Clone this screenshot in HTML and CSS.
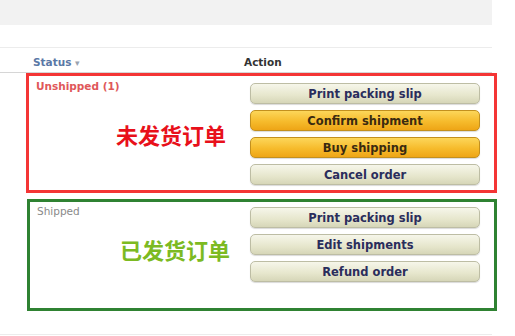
FILE: index.html
```html
<!DOCTYPE html>
<html lang="zh-CN">
<head>
  <meta charset="utf-8">
  <title>Orders</title>
  <link rel="stylesheet" href="styles.css">
</head>
<body>
<div class="topbar"></div>
<div class="table-head">
  <span class="col-status">Status <span class="caret">&#9662;</span></span>
  <span class="col-action">Action</span>
</div>

<div class="group group-red">
  <div class="status status-unshipped">Unshipped (1)</div>
  <div class="label label-red">未发货订单</div>
  <div class="actions">
    <button class="btn">Print packing slip</button>
    <button class="btn btn-primary">Confirm shipment</button>
    <button class="btn btn-primary">Buy shipping</button>
    <button class="btn">Cancel order</button>
  </div>
</div>

<div class="group group-green">
  <div class="status status-shipped">Shipped</div>
  <div class="label label-green">已发货订单</div>
  <div class="actions">
    <button class="btn">Print packing slip</button>
    <button class="btn">Edit shipments</button>
    <button class="btn">Refund order</button>
  </div>
</div>
<div class="table-foot"></div>
</body>
</html>
```

FILE: styles.css
```css
body {
  margin: 0;
  width: 515px;
  background-color: white;
  font-family: "DejaVu Sans", Verdana, sans-serif;
}

.topbar {
  width: 492px;
  height: 25px;
  background-color: #f2f2f2;
}

/* column headers */
.table-head {
  display: flex;
  align-items: center;
  width: 492px;
  height: 26px;
  margin-top: 22px;
  padding-top: 3px;
  box-sizing: border-box;
  border-top: 1px solid #ececec;
  border-bottom: 1px solid #d6d6d6;
  font-size: 10.5px;
  font-weight: bold;
}

.col-status {
  color: #5a78a6;
  margin-left: 33px;
  width: 211px;
}

.caret {
  color: #9aa3b0;
  font-size: 9px;
}

.col-action {
  color: #333;
}

/* annotated groups */
.group {
  display: grid;
  grid-template-columns: 81px 1fr 230px;
  box-sizing: border-box;
  padding: 4px 14px 0 7px;
}

.group-red {
  margin-left: 26px;
  width: 471px;
  height: 120px;
  border: 3px solid #f43535;
}

.group-green {
  margin-top: 6px;
  margin-left: 27px;
  width: 470px;
  height: 112px;
  padding-top: 3px;
  border: 3px solid #2f8232;
}

.status {
  font-size: 10.5px;
  line-height: 12px;
  white-space: nowrap;
}

.status-unshipped {
  color: #e0585a;
  font-weight: bold;
}

.status-shipped {
  color: #8a8a8a;
}

.label {
  font-family: "Noto Sans CJK SC", sans-serif;
  font-weight: bold;
  font-size: 22px;
  line-height: 24px;
  margin-top: 42px;
  margin-left: -1px;
}

.label-red {
  color: #e8101a;
}

.label-green {
  color: #7cba22;
  margin-top: 32px;
  margin-left: 2px;
}

.actions {
  display: flex;
  flex-direction: column;
  gap: 6px;
  margin-top: 3px;
}

.group-green .actions {
  margin-top: 2px;
}

.btn {
  height: 21px;
  padding: 0;
  border: 1px solid #bdbda4;
  border-radius: 5px;
  background: linear-gradient(#f6f6ea, #e6e6cc 60%, #d6d6b8);
  box-shadow: 0 1px 1px rgba(0, 0, 0, 0.15);
  color: #2a2d5c;
  font-family: "DejaVu Sans", Verdana, sans-serif;
  font-size: 11.5px;
  font-weight: bold;
}

.btn-primary {
  border-color: #c3901e;
  background: linear-gradient(#fcd65a, #f6bb2c 55%, #eea516);
  color: #3a2a10;
}

.table-foot {
  width: 492px;
  margin-top: 23px;
  border-top: 1px solid #ececec;
}
```
